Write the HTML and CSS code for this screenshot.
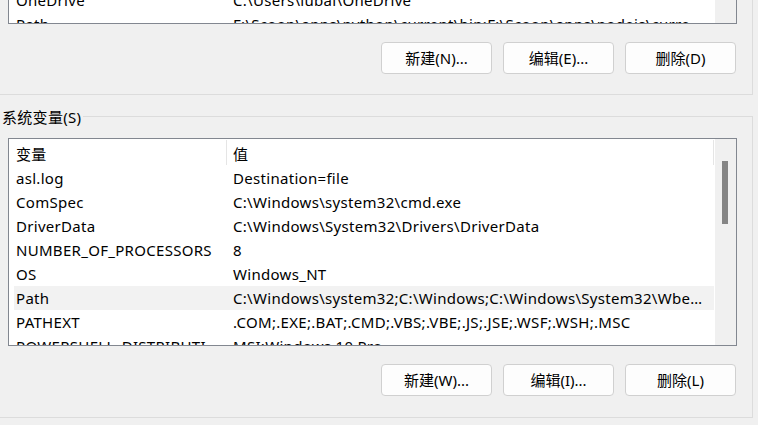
FILE: index.html
```html
<!DOCTYPE html>
<html lang="zh-CN">
<head>
<meta charset="utf-8">
<title>环境变量</title>
<link rel="stylesheet" href="styles.css">
</head>
<body>
<div class="window">
  <section class="group group-user">
    <div class="list list-user">
      <div class="rows">
        <div class="row"><span class="c1">OneDrive</span><span class="c2">C:\Users\lubai\OneDrive</span></div>
        <div class="row"><span class="c1">Path</span><span class="c2">F:\Scoop\apps\python\current\bin;F:\Scoop\apps\nodejs\current\bin;F:\Scoop\shims</span></div>
      </div>
      <div class="vscroll"></div>
    </div>
    <div class="buttons">
      <button class="btn">新建(N)...</button>
      <button class="btn">编辑(E)...</button>
      <button class="btn">删除(D)</button>
    </div>
  </section>

  <section class="group group-sys">
    <div class="caption"><span class="caption-text">系统变量(S)</span><span class="caption-line"></span></div>
    <div class="list list-sys">
      <div class="rows">
        <div class="row head"><span class="c1">变量</span><span class="c2">值</span></div>
        <div class="row"><span class="c1">asl.log</span><span class="c2">Destination=file</span></div>
        <div class="row"><span class="c1">ComSpec</span><span class="c2">C:\Windows\system32\cmd.exe</span></div>
        <div class="row"><span class="c1">DriverData</span><span class="c2">C:\Windows\System32\Drivers\DriverData</span></div>
        <div class="row"><span class="c1">NUMBER_OF_PROCESSORS</span><span class="c2">8</span></div>
        <div class="row"><span class="c1">OS</span><span class="c2">Windows_NT</span></div>
        <div class="row hl"><span class="c1">Path</span><span class="c2">C:\Windows\system32;C:\Windows;C:\Windows\System32\Wbem;C:\Windows\System32\WindowsPowerShell\v1.0\</span></div>
        <div class="row"><span class="c1">PATHEXT</span><span class="c2">.COM;.EXE;.BAT;.CMD;.VBS;.VBE;.JS;.JSE;.WSF;.WSH;.MSC</span></div>
        <div class="row"><span class="c1">POWERSHELL_DISTRIBUTION_CHANNEL</span><span class="c2">MSI:Windows 10 Pro</span></div>
      </div>
      <div class="vscroll"><div class="thumb"></div></div>
    </div>
    <div class="buttons">
      <button class="btn">新建(W)...</button>
      <button class="btn">编辑(I)...</button>
      <button class="btn">删除(L)</button>
    </div>
  </section>
</div>
</body>
</html>
```
FILE: styles.css
```css
* { box-sizing: border-box; }

html, body {
  margin: 0;
  height: 100%;
}

body {
  background: #f0f0f0;
  font-family: "Noto Sans", "Noto Sans CJK SC", sans-serif;
  font-size: 15px;
  letter-spacing: 0.3px;
  color: #000;
  overflow: hidden;
}

.group {
  width: 753px;
  display: flex;
  flex-direction: column;
  border-right: 1px solid #dcdcdc;
  border-bottom: 1px solid #dcdcdc;
}

.group-user {
  padding-bottom: 20px;
}

.group-sys {
  margin-top: 21px;
  padding-bottom: 21px;
}

.caption {
  display: flex;
  align-items: center;
  height: 1px;
}

.caption-text {
  padding: 0 2px;
  line-height: 20px;
  white-space: nowrap;
}

.caption-line {
  flex: 1;
  height: 1px;
  background: #dcdcdc;
}

.list {
  display: flex;
  background: #fff;
  border: 1px solid #828790;
  margin-left: 8px;
  margin-right: 15px;
  overflow: hidden;
}

.list-user {
  margin-top: -12px;
  height: 36px;
  border-top: none;
}

.list-sys {
  margin-top: 21px;
  height: 208px;
}

.rows {
  flex: 1;
  min-width: 0;
  padding-left: 5px;
  padding-right: 1px;
}

.vscroll {
  flex: none;
  width: 21px;
  background: #f0f0f0;
  padding: 22px 0 0 7px;
}

.thumb {
  width: 6px;
  height: 63px;
  background: #858585;
}

.row {
  display: flex;
  height: 24px;
  line-height: 24px;
  white-space: nowrap;
}

.row.hl {
  background: #f2f2f2;
}

.c1 {
  flex: none;
  width: 213px;
  padding-left: 2px;
  overflow: hidden;
  text-overflow: ellipsis;
}

.c2 {
  flex: 1;
  min-width: 0;
  padding-left: 6px;
  padding-right: 6px;
  overflow: hidden;
  text-overflow: ellipsis;
}

.row.head {
  height: 27px;
  padding: 1px 0;
}

.row.head .c1,
.row.head .c2 {
  height: 25px;
  line-height: 22px;
  padding-top: 3px;
  border-right: 1px solid #e5e5e5;
}

.buttons {
  display: flex;
  justify-content: flex-end;
  gap: 11px;
  margin-top: 18px;
  margin-right: 16px;
}

.btn {
  width: 111px;
  height: 32px;
  padding: 0;
  border: 1px solid #d0d0d0;
  border-radius: 4px;
  background: #fdfdfd;
  font: inherit;
  line-height: 30px;
  color: #000;
  text-align: center;
}
```
